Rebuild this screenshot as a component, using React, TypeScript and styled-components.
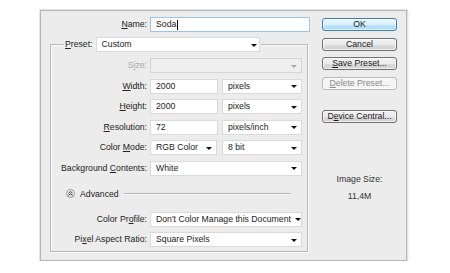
import React from "react";
import styled, { createGlobalStyle } from "styled-components";

const Global = createGlobalStyle`
  html, body { margin: 0; padding: 0; background: #ffffff; }
  body { font-family: "Liberation Sans", Arial, sans-serif; font-size: 8.7px; color: #222; }
  * { box-sizing: border-box; }
`;

const Page = styled.div`
  padding: 10px 0 0 40px;
`;

const Dialog = styled.div`
  width: 367px;
  height: 251px;
  background: #ececec;
  border: 1px solid #b7b7b7;
  box-shadow: 0 0 0 1px #e4e4e4, 1px 1px 3px rgba(0, 0, 0, 0.12);
  display: flex;
`;

const LeftCol = styled.div`
  width: 270px;
  padding-top: 6px;
  display: flex;
  flex-direction: column;
`;

const NameRow = styled.div`
  display: grid;
  grid-template-columns: 106px 160px;
  column-gap: 3px;
  height: 15px;
`;

const Label = styled.label<{ $disabled?: boolean }>`
  text-align: right;
  line-height: 15px;
  white-space: nowrap;
  color: ${(p) => (p.$disabled ? "#a9a9a9" : "#222")};
  u { text-decoration: underline; text-underline-offset: 1px; }
`;

const Input = styled.div<{ $focused?: boolean }>`
  height: 15px;
  background: #fff;
  border: 1px solid ${(p) => (p.$focused ? "#9cc3e8" : "#dadada")};
  padding: 0 5px;
  line-height: 13px;
  white-space: nowrap;
  display: flex;
  align-items: center;
`;

const Caret = styled.span`
  display: inline-block;
  width: 1px;
  height: 10px;
  background: #000;
  margin-left: 1px;
`;

const Select = styled.div<{ $disabled?: boolean; $arrowRight?: number }>`
  height: 15px;
  background: ${(p) => (p.$disabled ? "#efefef" : "#fff")};
  border: 1px solid ${(p) => (p.$disabled ? "#d4d4d4" : "#dadada")};
  padding: 0 ${(p) => p.$arrowRight ?? 4}px 0 5px;
  line-height: 13px;
  white-space: nowrap;
  display: flex;
  align-items: center;
  justify-content: space-between;
  gap: 4px;
`;

const Arrow = styled.span<{ $disabled?: boolean }>`
  flex: none;
  width: 0;
  height: 0;
  border-left: 3px solid transparent;
  border-right: 3px solid transparent;
  border-top: 3px solid ${(p) => (p.$disabled ? "#a8a8a8" : "#111")};
  margin-top: 1px;
`;

const Group = styled.fieldset`
  margin: 5px 0 0 9px;
  padding: 6px 5px 4px 0;
  border: 1px solid #b9b9b9;
  box-shadow: inset 1px 1px 0 #fafafa, 1px 1px 0 #fafafa;
  width: 258px;
  min-width: 0;
`;

const Legend = styled.legend`
  margin-left: 13px;
  padding: 0 1px;
  display: grid;
  grid-template-columns: auto 164px;
  column-gap: 3px;
  height: 15px;
`;

const Rows = styled.div`
  display: flex;
  flex-direction: column;
  gap: 5.5px;
`;

const FieldRow = styled.div<{ $gapTop?: number }>`
  display: grid;
  grid-template-columns: 96px 152px;
  column-gap: 3px;
  height: 15px;
  margin-top: ${(p) => p.$gapTop ?? 0}px;
`;

const Pair = styled.div<{ $first: number }>`
  display: grid;
  grid-template-columns: ${(p) => p.$first}px 1fr;
  column-gap: ${(p) => 72 - p.$first}px;
`;

const AdvancedRow = styled.div`
  display: flex;
  align-items: center;
  height: 11px;
  margin-top: 7px;
  padding: 0 11px 0 15px;
  gap: 5px;
`;

const AdvIcon = styled.span`
  width: 9px;
  height: 9px;
  border-radius: 50%;
  border: 1px solid #9c9c9c;
  background: linear-gradient(#fafafa, #dcdcdc);
  display: flex;
  align-items: center;
  justify-content: center;
`;

const Rule = styled.span`
  flex: 1;
  height: 2px;
  border-top: 1px solid #b4b4b4;
  border-bottom: 1px solid #fbfbfb;
`;

const RightCol = styled.div`
  width: 75px;
  margin-left: 11px;
  padding-top: 7px;
  display: flex;
  flex-direction: column;
`;

const Button = styled.div<{ $variant?: "default" | "normal" | "disabled"; $gapTop?: number }>`
  height: 13px;
  margin-top: ${(p) => p.$gapTop ?? 0}px;
  border-radius: 3px;
  text-align: center;
  line-height: 11px;
  white-space: nowrap;
  border: 1px solid
    ${(p) => (p.$variant === "default" ? "#3c7fb1" : p.$variant === "disabled" ? "#b5b9bb" : "#707070")};
  color: ${(p) => (p.$variant === "disabled" ? "#8a8a8a" : "#1a1a1a")};
  background: ${(p) =>
    p.$variant === "default"
      ? "linear-gradient(#eaf6fd 0%, #d9f0fc 50%, #bee6fd 51%, #a7d9f5 100%)"
      : p.$variant === "disabled"
      ? "#f4f4f4"
      : "linear-gradient(#f2f2f2 0%, #ebebeb 50%, #dddddd 51%, #cfcfcf 100%)"};
  box-shadow: inset 0 0 0 1px rgba(255, 255, 255, 0.7);
  u { text-decoration: underline; text-underline-offset: 1px; }
`;

const Info = styled.div`
  margin-top: 48px;
  text-align: center;
  line-height: 17px;
  color: #333;
`;

export default function App() {
  return (
    <>
      <Global />
      <Page>
        <Dialog>
          <LeftCol>
            <NameRow>
              <Label>
                <u>N</u>ame:
              </Label>
              <Input $focused>
                Soda
                <Caret />
              </Input>
            </NameRow>
            <Group>
              <Legend>
                <Label>
                  <u>P</u>reset:
                </Label>
                <Select $arrowRight={2}>
                  Custom
                  <Arrow />
                </Select>
              </Legend>
              <Rows>
                <FieldRow>
                  <Label $disabled>
                    S<u>i</u>ze:
                  </Label>
                  <Select $disabled>
                    <span />
                    <Arrow $disabled />
                  </Select>
                </FieldRow>
                <FieldRow>
                  <Label>
                    <u>W</u>idth:
                  </Label>
                  <Pair $first={68}>
                    <Input>2000</Input>
                    <Select>
                      pixels
                      <Arrow />
                    </Select>
                  </Pair>
                </FieldRow>
                <FieldRow>
                  <Label>
                    <u>H</u>eight:
                  </Label>
                  <Pair $first={68}>
                    <Input>2000</Input>
                    <Select>
                      pixels
                      <Arrow />
                    </Select>
                  </Pair>
                </FieldRow>
                <FieldRow>
                  <Label>
                    <u>R</u>esolution:
                  </Label>
                  <Pair $first={68}>
                    <Input>72</Input>
                    <Select>
                      pixels/inch
                      <Arrow />
                    </Select>
                  </Pair>
                </FieldRow>
                <FieldRow>
                  <Label>
                    Color <u>M</u>ode:
                  </Label>
                  <Pair $first={67}>
                    <Select>
                      RGB Color
                      <Arrow />
                    </Select>
                    <Select>
                      8 bit
                      <Arrow />
                    </Select>
                  </Pair>
                </FieldRow>
                <FieldRow>
                  <Label>
                    Background <u>C</u>ontents:
                  </Label>
                  <Select>
                    White
                    <Arrow />
                  </Select>
                </FieldRow>
                <AdvancedRow>
                  <AdvIcon>
                    <svg width="5" height="5" viewBox="0 0 5 5">
                      <path d="M0.5 2.2 L2.5 0.5 L4.5 2.2 M0.5 4.4 L2.5 2.7 L4.5 4.4" fill="none" stroke="#222" strokeWidth="0.9" />
                    </svg>
                  </AdvIcon>
                  <span>Advanced</span>
                  <Rule />
                </AdvancedRow>
                <FieldRow $gapTop={7}>
                  <Label>
                    Color Pr<u>o</u>file:
                  </Label>
                  <Select>
                    Don't Color Manage this Document
                    <Arrow />
                  </Select>
                </FieldRow>
                <FieldRow>
                  <Label>
                    Pi<u>x</u>el Aspect Ratio:
                  </Label>
                  <Select>
                    Square Pixels
                    <Arrow />
                  </Select>
                </FieldRow>
              </Rows>
            </Group>
          </LeftCol>
          <RightCol>
            <Button $variant="default">OK</Button>
            <Button $gapTop={6.5}>Cancel</Button>
            <Button $gapTop={6.5}>
              <u>S</u>ave Preset...
            </Button>
            <Button $variant="disabled" $gapTop={6.5}>
              <u>D</u>elete Preset...
            </Button>
            <Button $gapTop={20}>
              D<u>e</u>vice Central...
            </Button>
            <Info>
              Image Size:
              <br />
              11,4M
            </Info>
          </RightCol>
        </Dialog>
      </Page>
    </>
  );
}
